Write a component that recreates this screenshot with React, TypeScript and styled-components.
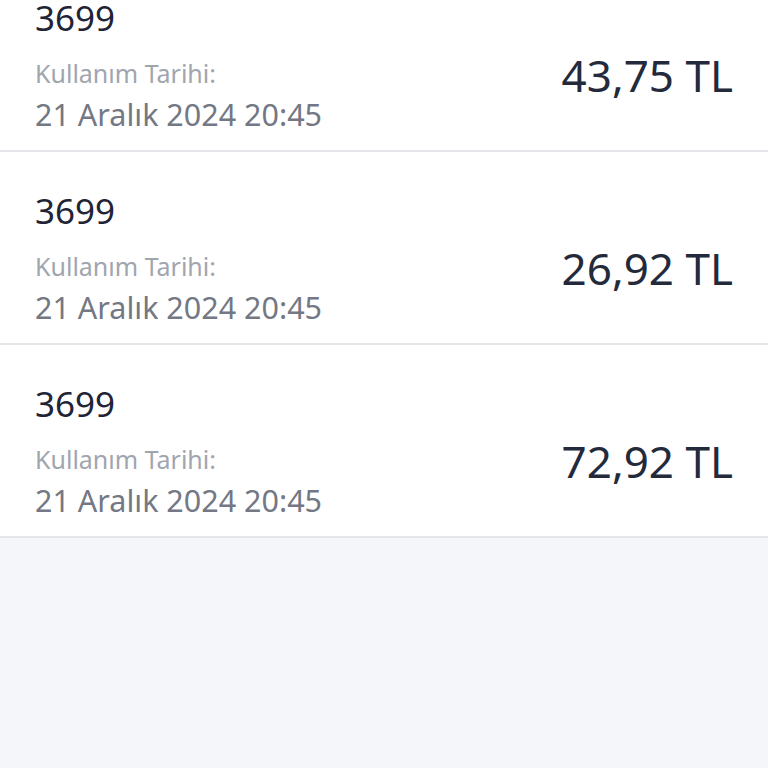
import styled, { createGlobalStyle } from "styled-components";

const GlobalStyle = createGlobalStyle`
  html, body {
    margin: 0;
    padding: 0;
    background: #f5f6f9;
    font-family: "Noto Sans", "Open Sans", sans-serif;
  }
`;

const usages = [
  { code: "3699", date: "21 Aralık 2024 20:45", amount: "43,75 TL" },
  { code: "3699", date: "21 Aralık 2024 20:45", amount: "26,92 TL" },
  { code: "3699", date: "21 Aralık 2024 20:45", amount: "72,92 TL" },
];

const App = () => {
  return (
    <>
      <GlobalStyle />
      <Screen>
        <List>
          {usages.map((u, i) => (
            <Row key={i}>
              <Info>
                <Code>{u.code}</Code>
                <Label>Kullanım Tarihi:</Label>
                <DateText>{u.date}</DateText>
              </Info>
              <Amount>{u.amount}</Amount>
            </Row>
          ))}
        </List>
      </Screen>
    </>
  );
};

export default App;

const Screen = styled.div`
  height: 768px;
  overflow: hidden;
  background: #f5f6f9;
`;

const List = styled.div`
  margin-top: -41px; /* list is scrolled a bit */
  display: flex;
  flex-direction: column;
`;

const Row = styled.div`
  display: flex;
  justify-content: space-between;
  align-items: flex-start;
  height: 193px;
  box-sizing: border-box;
  padding: 39px 35px 0 35px;
  background: #fff;
  border-bottom: 2px solid #e4e6ec;
`;

const Info = styled.div`
  display: flex;
  flex-direction: column;
`;

const Code = styled.div`
  font-size: 35px;
  line-height: 40px;
  color: #1f2537;
  margin-bottom: 19px;
`;

const Label = styled.div`
  font-size: 25px;
  line-height: 32px;
  color: #a1a5ae;
  margin-bottom: 6px;
`;

const DateText = styled.div`
  font-size: 30.5px;
  line-height: 38px;
  color: #737884;
`;

const Amount = styled.div`
  font-size: 44px;
  line-height: 52px;
  color: #232a3c;
  margin-top: 51px;
`;
